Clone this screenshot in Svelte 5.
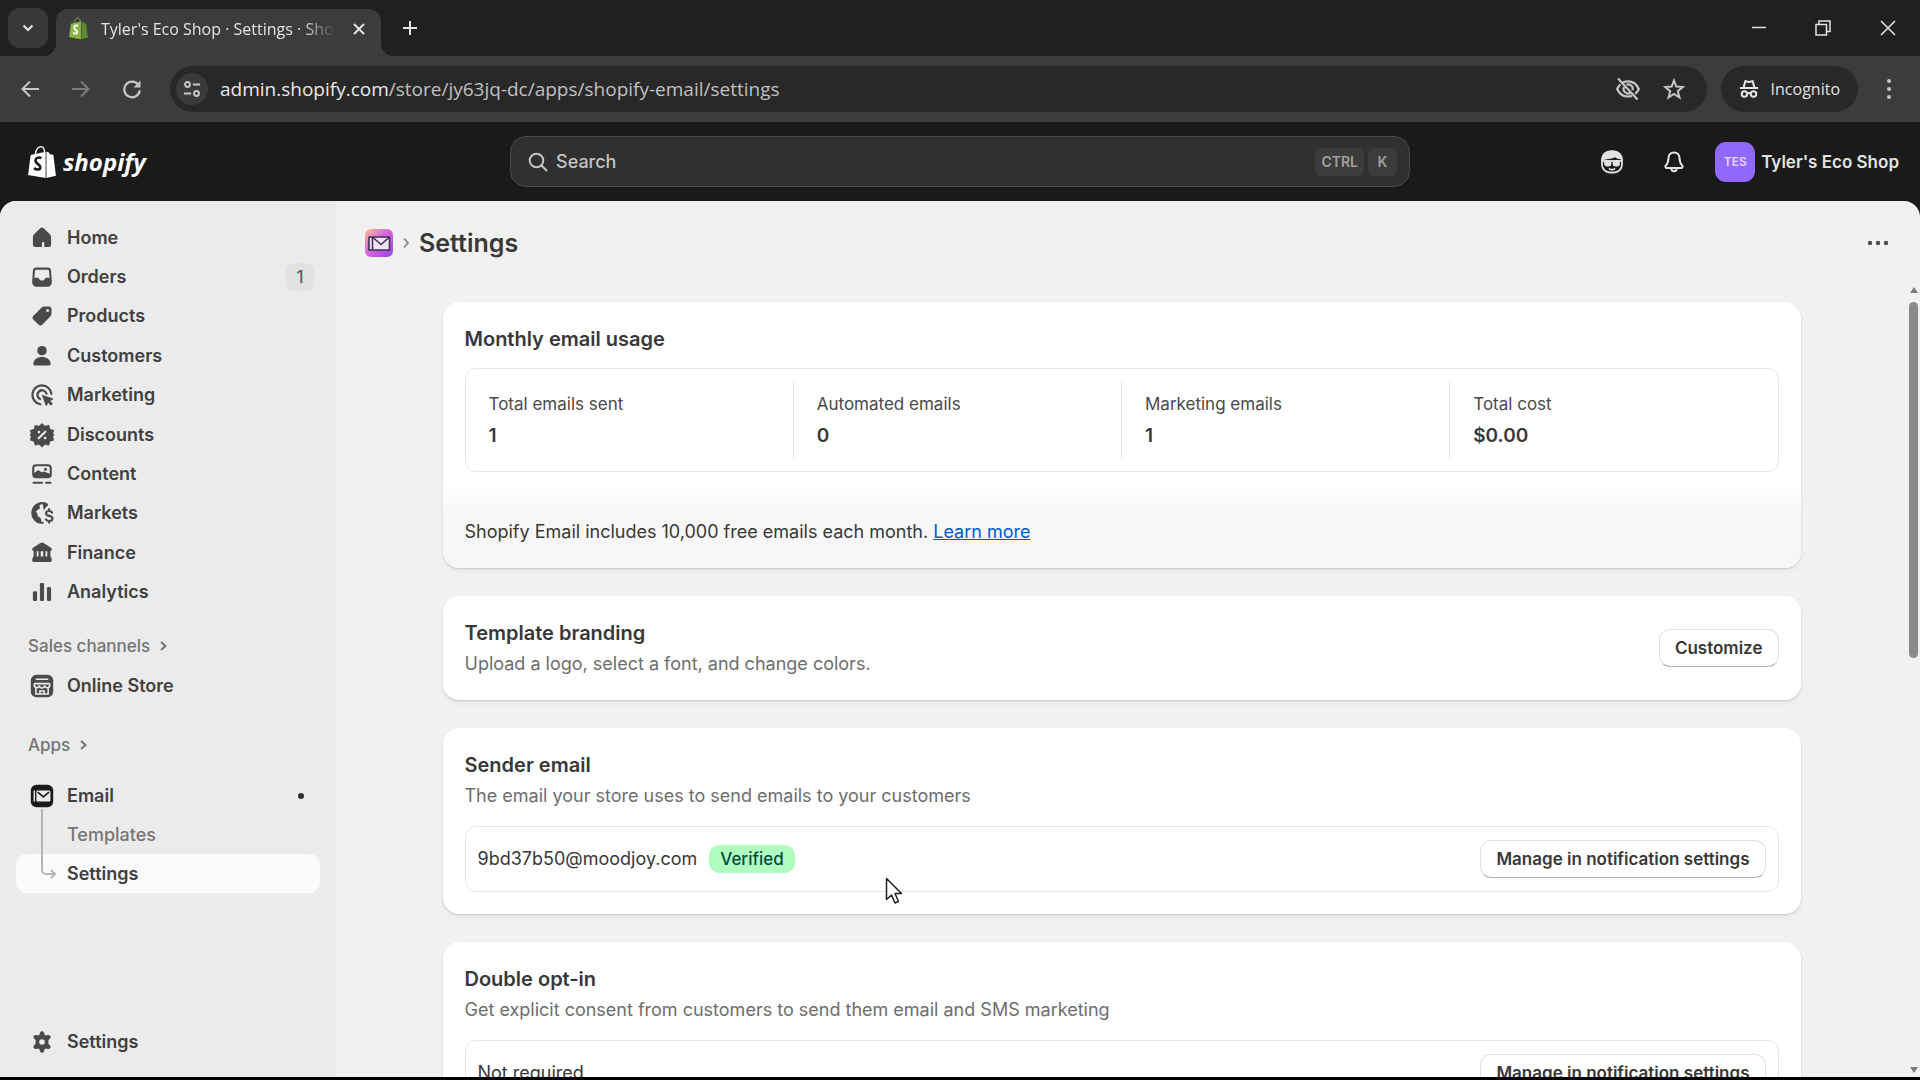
<script lang="ts">
    type NavItem = { label: string; icon: string; badge?: number };

    const nav: NavItem[] = [
        { label: "Home", icon: "home" },
        { label: "Orders", icon: "orders", badge: 1 },
        { label: "Products", icon: "products" },
        { label: "Customers", icon: "customers" },
        { label: "Marketing", icon: "marketing" },
        { label: "Discounts", icon: "discounts" },
        { label: "Content", icon: "content" },
        { label: "Markets", icon: "markets" },
        { label: "Finance", icon: "finance" },
        { label: "Analytics", icon: "analytics" },
    ];

    const stats = [
        { label: "Total emails sent", value: "1" },
        { label: "Automated emails", value: "0" },
        { label: "Marketing emails", value: "1" },
        { label: "Total cost", value: "$0.00" },
    ];

    let query = $state("");
</script>

{#snippet navIcon(name: string)}
    <svg class="nav-icon" viewBox="0 0 20 20" fill="currentColor" aria-hidden="true">
        {#if name === "home"}
            <path d="M8.6 3.2a2 2 0 0 1 2.8 0l4.3 4.2c.5.5.8 1.2.8 1.9v5.5a1.7 1.7 0 0 1-1.7 1.7h-2.600a.6.6 0 0 1-.6-.6v-2.300a.8.8 0 0 0-1.600 0v2.300a.6.6 0 0 1-.6.6H5.200a1.7 1.7 0 0 1-1.7-1.7V9.300c0-.7.3-1.400.8-1.900z" />
        {:else if name === "orders"}
            <path fill-rule="evenodd" d="M6 3.300h8a2.500 2.500 0 0 1 2.500 2.200l.5 7.300v1.200a3 3 0 0 1-3 3H6a3 3 0 0 1-3-3v-1.200l.5-7.300A2.500 2.500 0 0 1 6 3.300zm0 1.500a1 1 0 0 0-1 .9L4.600 10.500h2.200c.6 0 .9.400 1.200.9.400.7 1 1.100 2 1.100s1.600-.4 2-1.100c.3-.5.6-.9 1.200-.9h2.200L15 5.700a1 1 0 0 0-1-.9z" />
        {:else if name === "products"}
            <path fill-rule="evenodd" d="M11.800 3.200h3.200a1.800 1.800 0 0 1 1.800 1.800v3.200c0 .8-.3 1.500-.9 2.100l-5.600 5.800a2 2 0 0 1-2.800 0l-3.600-3.500a2 2 0 0 1 0-2.800l5.700-5.700c.6-.6 1.400-.9 2.200-.9zm2.200 4a1.100 1.100 0 1 0 0-2.200 1.100 1.100 0 0 0 0 2.200z" />
        {:else if name === "customers"}
            <circle cx="10" cy="6.200" r="3.400" />
            <path d="M10 10.800c3.300 0 6 1.800 6.200 4.700 0 .8-.6 1.300-1.400 1.300H5.200c-.8 0-1.400-.5-1.400-1.300.2-2.900 2.900-4.700 6.200-4.700z" />
        {:else if name === "marketing"}
            <path d="M8.800 16.600A6.800 6.800 0 1 1 16.700 9.200M8.600 12.900A3.300 3.300 0 1 1 13.200 9" fill="none" stroke="currentColor" stroke-width="1.600" stroke-linecap="round" />
            <path d="M9.800 9.800l7.700 2.600c.5.200.5.800 0 1l-1.700.8 2 2-1.400 1.400-2-2-.8 1.700c-.2.500-.8.500-1 0z" />
        {:else if name === "discounts"}
            <path d="M10 2.200l2 1.900 2.700-.7.700 2.700 2.700.8-.8 2.600 1 .5-1 .9.800 2.600-2.700.8-.7 2.700-2.700-.7-2 1.900-2-1.900-2.700.7-.7-2.700-2.700-.8.8-2.600-1-.9 1-.5-.8-2.600 2.700-.8.700-2.700 2.700.7z" stroke="currentColor" stroke-width="1" stroke-linejoin="round" />
            <path d="M7.600 12.400l4.800-4.800" stroke="#ebebeb" stroke-width="1.500" stroke-linecap="round" />
            <circle cx="7.800" cy="7.900" r="1" fill="#ebebeb" /><circle cx="12.200" cy="12.200" r="1" fill="#ebebeb" />
        {:else if name === "content"}
            <path fill-rule="evenodd" d="M5.800 3h8.400A2.800 2.800 0 0 1 17 5.800v4.400a2.800 2.800 0 0 1-2.800 2.800H5.800A2.800 2.800 0 0 1 3 10.200V5.800A2.800 2.800 0 0 1 5.800 3zm0 1.500c-.7 0-1.300.6-1.300 1.300v3.400l1.800-1.400c.7-.6 1.500-.6 2.100 0l1.300 1.200.4-.4c.7-.6 1.500-.6 2.100 0l3.300 1.200V5.800c0-.7-.6-1.300-1.300-1.300zM12.500 7.700a1.100 1.100 0 1 0 0-2.200 1.100 1.100 0 0 0 0 2.200z" />
            <path d="M4 16.200h6M13 16.200h3" stroke="currentColor" stroke-width="1.500" stroke-linecap="round" />
        {:else if name === "markets"}
            <path d="M10 3a7 7 0 0 0-6.700 5.100c1 .8 2.300.7 3 1.700.7 1 .2 1.900 1 2.700.7.600 1.500.6 1.900 1.600.3.900.1 1.800.8 2.800A7 7 0 0 1 3.200 8.200" />
            <path d="M13.500 3.900A7 7 0 1 0 10.500 17" fill="none" stroke="currentColor" stroke-width="1.500" stroke-linecap="round" />
            <path d="M8.500 4c-.8 1.200.6 1.800-.2 2.800-.8.900-2.100.8-2 2l-2.600.6C3.800 6.500 5.800 4 8.500 3.300zM11.300 8.300l1.200-2 1.900-2-1.700-1-2.200.2z" />
            <path d="M17.200 9.700c-.5-.8-1.200-1.100-2.200-1.100-1.200 0-2.100.6-2.100 1.700 0 2.400 4.600 1.100 4.600 3.600 0 1.100-1 1.800-2.300 1.800-1.100 0-2-.4-2.500-1.200M15.100 7.200v1.200M15.100 15.800V17" fill="none" stroke="currentColor" stroke-width="1.500" stroke-linecap="round" />
        {:else if name === "finance"}
            <path d="M8.900 2.900a2 2 0 0 1 2.200 0l5.100 3.200c1.400.9.800 2.600-.6 2.600H4.400C3 8.700 2.400 7 3.800 6.100z" />
            <path d="M4 8h2.200v5H4zM7.500 8h1.600v5H7.500zM10.900 8h1.600v5h-1.600zM13.800 8H16v5h-2.200zM4.600 12.500h10.800c.5 0 1 .300 1.200.8l.4 1.600c.2.900-.3 1.600-1.200 1.600H4.200c-.9 0-1.400-.7-1.200-1.600l.4-1.600c.2-.5.7-.8 1.200-.8z" />
        {:else if name === "analytics"}
            <rect x="3.500" y="9.500" width="3" height="7" rx="1" />
            <rect x="8.500" y="3.500" width="3" height="13" rx="1" />
            <rect x="13.500" y="6.500" width="3" height="10" rx="1" />
        {:else if name === "store"}
            <rect x="2" y="2" width="16" height="16" rx="4" />
            <path d="M5.500 5.200h9M4.500 8.300h11M4.500 8.300v1a1.800 1.800 0 0 0 3.600.2 1.900 1.900 0 0 0 3.800 0 1.800 1.800 0 0 0 3.600-.2v-1M5.600 11.500v4.200h8.800v-4.200M8.500 15.500v-2h3v2" fill="none" stroke="#ebebeb" stroke-width="1.100" />
        {:else if name === "email"}
            <rect x="2" y="2" width="16" height="16" rx="4" fill="#1a1a1a" />
            <rect x="6" y="6" width="10" height="8" rx="1" fill="#ebebeb" />
            <path d="M7 7.200l4 3.400 4-3.400" fill="none" stroke="#1a1a1a" stroke-width="1.200" />
            <path d="M4.500 6v8" stroke="#ebebeb" stroke-width="1" />
        {:else if name === "settings"}
            <path fill-rule="evenodd" d="M8.500 3.500c.2-.8.800-1.200 1.500-1.200s1.300.4 1.500 1.200l.3 1.300 1 .6 1.300-.4c.8-.2 1.400 0 1.800.7s.3 1.300-.3 1.900l-1 .9v3l1 .9c.6.600.7 1.200.3 1.900s-1 .9-1.800.7l-1.300-.4-1 .6-.3 1.300c-.2.800-.8 1.200-1.500 1.200s-1.300-.4-1.500-1.200l-.3-1.300-1-.6-1.300.4c-.8.200-1.400 0-1.800-.7s-.3-1.300.3-1.900l1-.9v-3l-1-.9c-.6-.6-.7-1.200-.3-1.900s1-.9 1.800-.7l1.300.4 1-.6zM10 12a2 2 0 1 0 0-4 2 2 0 0 0 0 4z" />
        {/if}
    </svg>
{/snippet}

{#snippet bag(body: string, side: string, letter: string)}
    <path d="M8 9c.4-4.500 3-7.500 5.500-7.500 2 0 3.300 2 3.500 5.500" fill="none" stroke={body} stroke-width="1.300" />
    <path d="M3.500 9.800 18 6.500V32L1 29z" fill={body} />
    <path d="M18.800 6.500l1.700.4 2.200 2.300 2.800.3L28 29.800 18.800 32z" fill={side} />
    <path d="M14 12.700c-3-1.300-5.800-.1-5.800 2.500 0 3.200 4.600 3.400 4.600 6.300 0 2.500-3 3.200-6 .9" fill="none" stroke={letter} stroke-width="2.600" />
{/snippet}

<div class="screen">
    <header class="tabs">
        <button class="tab-search" aria-label="Search tabs">
            <svg width="14" height="14" viewBox="0 0 14 14"><path d="M2.500 4.500 7 9l4.500-4.500" fill="none" stroke="currentColor" stroke-width="2.200" /></svg>
        </button>
        <div class="tab">
            <svg width="21" height="23" viewBox="0 0 29 33">{@render bag("#8db543", "#5c8a30", "#ffffff")}</svg>
            <span class="tab-title">Tyler's Eco Shop · Settings · Shopify</span>
            <button class="bare" aria-label="Close tab">
                <svg width="14" height="14" viewBox="0 0 14 14"><path d="M2 2l10 10M12 2 2 12" stroke="currentColor" stroke-width="2" /></svg>
            </button>
        </div>
        <button class="bare new-tab" aria-label="New tab">
            <svg width="16" height="16" viewBox="0 0 16 16"><path d="M8 1v14M1 8h14" stroke="currentColor" stroke-width="2" /></svg>
        </button>
        <div class="window-controls">
            <button class="bare" aria-label="Minimize"><svg width="14" height="14" viewBox="0 0 14 14"><path d="M0 6.500h14" stroke="currentColor" stroke-width="1.500" /></svg></button>
            <button class="bare" aria-label="Restore"><svg width="16" height="16" viewBox="0 0 16 16" fill="none" stroke="currentColor" stroke-width="1.500"><path d="M1 4.500h10.500V15H1zM4 4.500V1h11v10.500h-3.500" /></svg></button>
            <button class="bare" aria-label="Close"><svg width="16" height="16" viewBox="0 0 16 16"><path d="M1 1l14 14M15 1 1 15" stroke="currentColor" stroke-width="1.600" /></svg></button>
        </div>
    </header>

    <div class="toolbar">
        <button class="bare" aria-label="Back"><svg width="20" height="20" viewBox="0 0 20 20" fill="none" stroke="currentColor" stroke-width="2"><path d="M19 10H3M10 2.500 2.500 10l7.500 7.500" /></svg></button>
        <button class="bare dim" aria-label="Forward"><svg width="20" height="20" viewBox="0 0 20 20" fill="none" stroke="currentColor" stroke-width="2"><path d="M1 10h16M10 2.500 17.500 10 10 17.500" /></svg></button>
        <button class="bare" aria-label="Reload"><svg width="20" height="20" viewBox="0 0 20 20"><path d="M16.500 6A7.800 7.800 0 1 0 17.800 11.500" fill="none" stroke="currentColor" stroke-width="2.200" /><path d="M18.500 1.500v7h-7z" fill="currentColor" /></svg></button>
        <div class="omnibox">
            <button class="site-info" aria-label="Site information"><svg width="18" height="18" viewBox="0 0 20 20" fill="none" stroke="currentColor" stroke-width="2.200"><circle cx="5" cy="5" r="2.700" /><path d="M11 5h8M1 15h8" /><circle cx="15" cy="15" r="2.700" /></svg></button>
            <p class="url">admin.shopify.com<span>/store/jy63jq-dc/apps/shopify-email/settings</span></p>
            <button class="bare" aria-label="Third-party cookies blocked"><svg width="26" height="24" viewBox="0 0 26 24" fill="none" stroke="currentColor" stroke-width="2.200"><path d="M8 5.500A10.500 9 0 0 1 13 4.300c5 0 9 3.400 10.800 7.700a12 12 0 0 1-3.600 4.800M17 18.700a11.500 11.500 0 0 1-4 .8c-5 0-9-3.200-10.800-7.500A12 12 0 0 1 5.500 7.300M11.500 7.700a4.500 4.500 0 0 1 6 5.500M15.500 15.700A4.500 4.500 0 0 1 9 10M3 1.500 22.500 22.500" /></svg></button>
            <button class="bare" aria-label="Bookmark"><svg width="22" height="22" viewBox="0 0 22 22"><path d="M11 2.500l2.300 6 6.500.500-5 4.200 1.700 6.300-5.500-3.500-5.500 3.500 1.700-6.300-5-4.200 6.500-.5z" fill="none" stroke="currentColor" stroke-width="2" /></svg></button>
        </div>
        <button class="incognito">
            <svg width="20" height="20" viewBox="0 0 22 22" fill="none" stroke="currentColor" stroke-width="2.200"><path d="M1 9.800h20M5 9.500 7 2.500l4 .8 4-.8 2 7" /><circle cx="6" cy="16.500" r="3" /><circle cx="16" cy="16.500" r="3" /><path d="M9 16c1.300-.8 2.700-.8 4 0" /></svg>
            Incognito
        </button>
        <button class="bare" aria-label="Chrome menu"><svg width="6" height="22" viewBox="0 0 6 22" fill="currentColor"><circle cx="3" cy="3" r="2" /><circle cx="3" cy="11" r="2" /><circle cx="3" cy="19" r="2" /></svg></button>
    </div>

    <div class="topbar">
        <a class="brand" href="#home" aria-label="Shopify home">
            <svg width="30" height="34" viewBox="0 0 29 33">{@render bag("#ffffff", "#ffffff", "#1a1a1a")}</svg>
            <span>shopify</span>
        </a>
        <label class="search">
            <svg width="20" height="20" viewBox="0 0 20 20" fill="none" stroke="currentColor" stroke-width="2" stroke-linecap="round"><circle cx="8.500" cy="8.500" r="6.800" /><path d="M13.500 13.500 18.500 18.500" /></svg>
            <input type="text" placeholder="Search" aria-label="Search" bind:value={query} />
            <kbd>CTRL</kbd><kbd>K</kbd>
        </label>
        <div class="account">
            <button class="bare round" aria-label="Sidekick"><svg width="24" height="24" viewBox="0 0 24 24" fill="none" stroke="currentColor" stroke-width="1.800"><rect x="2" y="1.500" width="20" height="21" rx="8" /><path d="M2.500 9C3 4 7 1.500 12 1.500s9 2.500 9.500 7c-3-.2-5-1-6.500-2.500C12.500 8 6 8.500 2.500 9z" fill="currentColor" /><path d="M2 11h20" /><rect x="5" y="11" width="5.500" height="4.500" rx="2" fill="currentColor" /><rect x="13.500" y="11" width="5.500" height="4.500" rx="2" fill="currentColor" /><path d="M9.500 19c1.500.8 3.500.8 5 0" stroke-linecap="round" /></svg></button>
            <button class="bare round" aria-label="Notifications"><svg width="22" height="24" viewBox="0 0 22 24" fill="none" stroke="currentColor" stroke-width="2" stroke-linejoin="round"><path d="M11 2.500c-3.300 0-5.500 2.300-5.500 5.500 0 4-.8 5.500-2.700 7.500-.8.900-.4 2.500 1 2.500h14.400c1.400 0 1.800-1.600 1-2.500-1.900-2-2.700-3.500-2.700-7.500 0-3.200-2.200-5.500-5.500-5.500zM8.300 18.500a2.700 2.700 0 0 0 5.400 0" /></svg></button>
            <button class="bare shop"><span class="avatar">TES</span>Tyler's Eco Shop</button>
        </div>
    </div>

    <div class="frame">
        <nav class="sidebar">
            <ul class="primary">
                {#each nav as item}
                    <li>
                        <a class="nav-link" href="#{item.icon}">
                            {@render navIcon(item.icon)}
                            {item.label}
                            {#if item.badge}<span class="count">{item.badge}</span>{/if}
                        </a>
                    </li>
                {/each}
            </ul>
            <button class="section">Sales channels <svg width="9" height="12" viewBox="0 0 9 12"><path d="M2 2l4.500 4L2 10" fill="none" stroke="currentColor" stroke-width="2" /></svg></button>
            <a class="nav-link" href="#store">{@render navIcon("store")}Online Store</a>
            <button class="section apps">Apps <svg width="9" height="12" viewBox="0 0 9 12"><path d="M2 2l4.500 4L2 10" fill="none" stroke="currentColor" stroke-width="2" /></svg></button>
            <div class="app-group">
                <a class="nav-link" href="#email">{@render navIcon("email")}Email<span class="dot"></span></a>
                <a class="nav-link sub" href="#templates">Templates</a>
                <a class="nav-link sub current" href="#email-settings">Settings</a>
                <svg class="branch" width="20" height="74" viewBox="0 0 20 74" fill="none" stroke="#b5b5b5" stroke-width="2"><path d="M2 0v61a4 4 0 0 0 4 4h9M11 61l4 4-4 4" /></svg>
            </div>
            <a class="nav-link bottom" href="#settings">{@render navIcon("settings")}Settings</a>
        </nav>

        <main>
            <div class="page-head">
                <svg width="28" height="28" viewBox="0 0 28 28">
                    <defs>
                        <linearGradient id="app-tile" x1="0" y1="0" x2="1" y2="1">
                            <stop offset="0" stop-color="#fcc08a" /><stop offset=".4" stop-color="#df6ddb" /><stop offset="1" stop-color="#9a3cf0" />
                        </linearGradient>
                    </defs>
                    <rect width="28" height="28" rx="6" fill="url(#app-tile)" />
                    <path d="M4 8h20.500v13H4z" fill="#f3e3fb" stroke="#403050" stroke-width="1.600" stroke-linejoin="round" />
                    <path d="M7.500 8v13M8 8.500l8 7 8-7" fill="none" stroke="#403050" stroke-width="1.600" />
                </svg>
                <svg width="8" height="12" viewBox="0 0 8 12"><path d="M2 1.500l4 4.500-4 4.500" fill="none" stroke="#8a8a8a" stroke-width="1.800" /></svg>
                <h1>Settings</h1>
                <button class="bare more" aria-label="More actions"><svg width="22" height="6" viewBox="0 0 22 6" fill="currentColor"><circle cx="3" cy="3" r="2.200" /><circle cx="11" cy="3" r="2.200" /><circle cx="19" cy="3" r="2.200" /></svg></button>
            </div>

            <div class="scroller">
                <div class="cards">
                    <section class="card usage">
                        <h2>Monthly email usage</h2>
                        <dl class="stats">
                            {#each stats as stat}
                                <div>
                                    <dt>{stat.label}</dt>
                                    <dd>{stat.value}</dd>
                                </div>
                            {/each}
                        </dl>
                        <p class="note">Shopify Email includes 10,000 free emails each month. <a href="#learn">Learn more</a></p>
                    </section>

                    <section class="card branding">
                        <div>
                            <h2>Template branding</h2>
                            <p class="muted">Upload a logo, select a font, and change colors.</p>
                        </div>
                        <button class="btn">Customize</button>
                    </section>

                    <section class="card">
                        <h2>Sender email</h2>
                        <p class="muted">The email your store uses to send emails to your customers</p>
                        <div class="row">
                            <span>9bd37b50@moodjoy.com</span>
                            <span class="verified">Verified</span>
                            <button class="btn">Manage in notification settings</button>
                        </div>
                    </section>

                    <section class="card">
                        <h2>Double opt-in</h2>
                        <p class="muted">Get explicit consent from customers to send them email and SMS marketing</p>
                        <div class="row">
                            <span>Not required</span>
                            <button class="btn">Manage in notification settings</button>
                        </div>
                    </section>
                </div>
                <div class="scrollbar" aria-hidden="true">
                    <svg width="8" height="6" viewBox="0 0 8 6"><path d="M4 0l4 6H0z" fill="#7d7d7d" /></svg>
                    <div class="track"><div class="thumb"></div></div>
                    <svg width="8" height="6" viewBox="0 0 8 6"><path d="M0 0h8L4 6z" fill="#7d7d7d" /></svg>
                </div>
            </div>
        </main>
    </div>

    <svg class="cursor" width="18" height="28" viewBox="0 0 18 28"><path d="M1.500 1.500v21l5-4.500 3.500 8 3.500-1.500-3.500-8h6.500z" fill="#fff" stroke="#222" stroke-width="1.500" stroke-linejoin="round" /></svg>
</div>

<style>
    :global(body) {
        margin: 0;
        background: #000;
    }

    .screen {
        position: relative;
        display: flex;
        flex-direction: column;
        box-sizing: border-box;
        height: 100vh;
        border-bottom: 3px solid #000;
        overflow: hidden;
        background: #1a1a1a;
        font-family: Inter, "Liberation Sans", sans-serif;
        font-size: 18px;
        line-height: 28px;
        color: #383838;
    }

    .screen *,
    .screen *::before {
        box-sizing: border-box;
    }

    h1, h2, p, ul, dl, dd {
        margin: 0;
        padding: 0;
    }

    button {
        font: inherit;
        color: inherit;
        cursor: pointer;
    }

    svg {
        flex: none;
        display: block;
    }

    .bare {
        display: flex;
        align-items: center;
        padding: 0;
        border: 0;
        background: none;
    }

    /* BROWSER */
    .tabs {
        display: flex;
        align-items: center;
        height: 56px;
        padding: 0 16px 0 8px;
        background: #202020;
        color: #e3e3e3;
        font-family: "Open Sans", "Noto Sans", sans-serif;
    }

    .tab-search {
        display: grid;
        place-items: center;
        width: 40px;
        height: 40px;
        border: 0;
        border-radius: 12px;
        background: #383838;
    }

    .tab {
        position: relative;
        display: flex;
        align-items: center;
        gap: 12px;
        align-self: flex-end;
        width: 325px;
        height: 47px;
        margin-left: 8px;
        padding: 0 15px 8px 12px;
        border-radius: 12px 12px 0 0;
        background: #3c3c3c;
    }

    .tab::before,
    .tab::after {
        content: "";
        position: absolute;
        bottom: 0;
        width: 12px;
        height: 12px;
    }

    .tab::before {
        right: 100%;
        background: radial-gradient(circle at 0 0, transparent 12px, #3c3c3c 12px);
    }

    .tab::after {
        left: 100%;
        background: radial-gradient(circle at 100% 0, transparent 12px, #3c3c3c 12px);
    }

    .tab-title {
        flex: 1;
        overflow: hidden;
        white-space: nowrap;
        font-size: 16px;
        mask-image: linear-gradient(to right, #000 84%, transparent 98%);
    }

    .new-tab {
        margin-left: 21px;
    }

    .window-controls {
        display: flex;
        gap: 49px;
        margin-left: auto;
        padding-right: 8px;
    }

    .toolbar {
        display: flex;
        align-items: center;
        height: 66px;
        padding: 0 28px 0 20px;
        background: #3c3c3c;
        color: #c7c7c7;
        font-family: "Open Sans", "Noto Sans", sans-serif;
    }

    .toolbar > .bare {
        margin-right: 31px;
    }

    .toolbar > .bare:last-child {
        margin: 0 0 0 28px;
    }

    .dim {
        color: #7c7c7c;
    }

    .omnibox {
        flex: 1;
        display: flex;
        align-items: center;
        gap: 22px;
        height: 46px;
        margin-left: -3px;
        padding: 0 22px 0 6px;
        border-radius: 23px;
        background: #282828;
    }

    .site-info {
        display: grid;
        place-items: center;
        width: 32px;
        height: 32px;
        padding: 0;
        border: 0;
        border-radius: 16px;
        background: #3a3a3a;
    }

    .url {
        flex: 1;
        margin-left: -10px;
        color: #e8e8e8;
        font-size: 19px;
        white-space: nowrap;
    }

    .url span {
        color: #c0c0c0;
    }

    .incognito {
        display: flex;
        align-items: center;
        gap: 12px;
        height: 46px;
        margin-left: 14px;
        padding: 0 18px;
        border: 0;
        border-radius: 23px;
        background: #282828;
        color: #e3e3e3;
        font-size: 16px;
    }

    /* TOP BAR */
    .topbar {
        display: grid;
        grid-template-columns: 1fr 900px 1fr;
        align-items: center;
        height: 79px;
        padding: 0 21px;
        background: #1a1a1a;
        color: #e3e3e3;
        font-weight: 600;
    }

    .brand {
        display: flex;
        align-items: center;
        gap: 6px;
        padding-left: 6px;
        color: #fff;
        font-family: "Open Sans", sans-serif;
        font-size: 24px;
        font-style: italic;
        font-weight: 700;
        text-decoration: none;
    }

    .search {
        display: flex;
        align-items: center;
        height: 51px;
        padding: 0 12px 0 17px;
        border: 1px solid #4a4a4a;
        border-radius: 16px;
        background: #303030;
        color: #c4c4c4;
    }

    .search input {
        flex: 1;
        padding: 0 0 0 8px;
        border: 0;
        outline: 0;
        background: none;
        color: inherit;
        font: inherit;
        font-weight: 500;
    }

    .search input::placeholder {
        color: #c4c4c4;
        opacity: 1;
    }

    kbd {
        min-width: 29px;
        margin-left: 4px;
        padding: 0 6px;
        border-radius: 6px;
        background: #3c3c3c;
        color: #a0a0a0;
        font-family: inherit;
        font-size: 14px;
        font-weight: 600;
        text-align: center;
    }

    .account {
        display: flex;
        align-items: center;
        justify-content: flex-end;
    }

    .round {
        justify-content: center;
        width: 62px;
    }

    .shop {
        gap: 6px;
        margin-left: 10px;
        font-size: 17px;
        font-weight: 600;
    }

    .avatar {
        display: grid;
        place-items: center;
        width: 40px;
        height: 40px;
        border-radius: 11px;
        background: #9168fb;
        color: #e4d9ff;
        font-size: 12px;
    }

    /* SIDEBAR */
    .frame {
        flex: 1;
        display: flex;
        min-height: 0;
        overflow: hidden;
        border-radius: 16px 16px 0 0;
        background: #f1f1f1;
    }

    .sidebar {
        display: flex;
        flex-direction: column;
        width: 336px;
        padding: 17px 16px 16px;
        background: #ebebeb;
    }

    .primary {
        display: grid;
        grid-auto-rows: 1fr;
        min-height: 394px;
        list-style: none;
    }

    .nav-link {
        display: flex;
        align-items: center;
        gap: 11px;
        height: 39px;
        padding: 0 6px 0 12px;
        border-radius: 11px;
        color: #404040;
        font-weight: 600;
        text-decoration: none;
    }

    .nav-icon {
        width: 28px;
        height: 28px;
        color: #4a4a4a;
    }

    .count {
        width: 28px;
        margin-left: auto;
        border-radius: 8px;
        background: #e2e2e2;
        color: #616161;
        font-size: 17px;
        font-weight: 500;
        text-align: center;
    }

    .section {
        display: flex;
        align-items: center;
        gap: 9px;
        height: 41px;
        margin-top: 13px;
        padding: 0 12px;
        border: 0;
        background: none;
        color: #757575;
        font-size: 17px;
        font-weight: 500;
    }

    .apps {
        margin-top: 19px;
    }

    .app-group {
        position: relative;
        margin-top: 11px;
    }

    .sub {
        padding-left: 51px;
        color: #757575;
        font-weight: 500;
    }

    .current {
        background: #fafafa;
        color: #404040;
        font-weight: 600;
    }

    .dot {
        width: 6px;
        height: 6px;
        margin: 0 10px 0 auto;
        border-radius: 3px;
        background: #303030;
    }

    .branch {
        position: absolute;
        top: 33px;
        left: 24px;
    }

    .bottom {
        margin-top: auto;
    }

    /* PAGE */
    main {
        flex: 1;
        display: flex;
        flex-direction: column;
        min-width: 0;
    }

    .page-head {
        display: flex;
        align-items: center;
        gap: 9px;
        height: 84px;
        padding: 0 31px 0 29px;
    }

    h1 {
        font-size: 25px;
        font-weight: 600;
    }

    .more {
        margin-left: auto;
        color: #4a4a4a;
    }

    .scroller {
        flex: 1;
        display: flex;
        min-height: 0;
        overflow: hidden;
    }

    .cards {
        flex: 1;
        display: flex;
        flex-direction: column;
        gap: 28px;
        max-width: 1358px;
        margin: 17px auto 0;
    }

    .card {
        flex: none;
        padding: 22px;
        border-radius: 16px;
        background: #fff;
        box-shadow: 0 1px 2px rgba(0, 0, 0, 0.16), 0 4px 6px rgba(0, 0, 0, 0.03);
    }

    .usage {
        padding-bottom: 0;
        overflow: hidden;
    }

    h2 {
        font-size: 20px;
        font-weight: 600;
        line-height: 30px;
    }

    .stats {
        display: flex;
        margin-top: 14px;
        padding: 12px 0;
        border: 1px solid #e6e6e6;
        border-radius: 11px;
    }

    .stats div {
        flex: 1;
        padding: 9px 23px;
    }

    .stats div + div {
        border-left: 1px solid #e3e3e3;
    }

    dt {
        color: #4a4a4a;
        font-size: 17px;
    }

    dd {
        margin-top: 4px;
        font-size: 19px;
        font-weight: 600;
    }

    .note {
        margin: 14px -22px 0;
        padding: 32px 22px 22px;
        background: linear-gradient(#fff, #f7f7f7 28px);
    }

    .note a {
        color: #005bd3;
    }

    .branding {
        display: flex;
        align-items: center;
        justify-content: space-between;
    }

    .muted {
        margin-top: 2px;
        color: #6e6e6e;
    }

    .row {
        display: flex;
        align-items: center;
        gap: 12px;
        margin-top: 16px;
        padding: 13px 12px;
        border: 1px solid #e6e6e6;
        border-radius: 11px;
    }

    .verified {
        padding: 0 11px;
        border-radius: 10px;
        background: #affebf;
        color: #014b40;
        font-size: 17px;
        font-weight: 500;
    }

    .btn {
        height: 38px;
        padding: 0 15px;
        border: 1px solid #e3e3e3;
        border-bottom-color: #b5b5b5;
        border-radius: 11px;
        background: #fff;
        font-size: 17px;
        font-weight: 600;
    }

    .row .btn {
        margin-left: auto;
    }

    .scrollbar {
        display: flex;
        flex-direction: column;
        align-items: center;
        width: 13px;
        padding: 2px 0 4px;
    }

    .track {
        flex: 1;
        padding-top: 9px;
    }

    .thumb {
        width: 9px;
        height: 356px;
        border-radius: 5px;
        background: #8a8a8a;
    }

    .cursor {
        position: absolute;
        top: 877px;
        left: 885px;
    }
</style>
